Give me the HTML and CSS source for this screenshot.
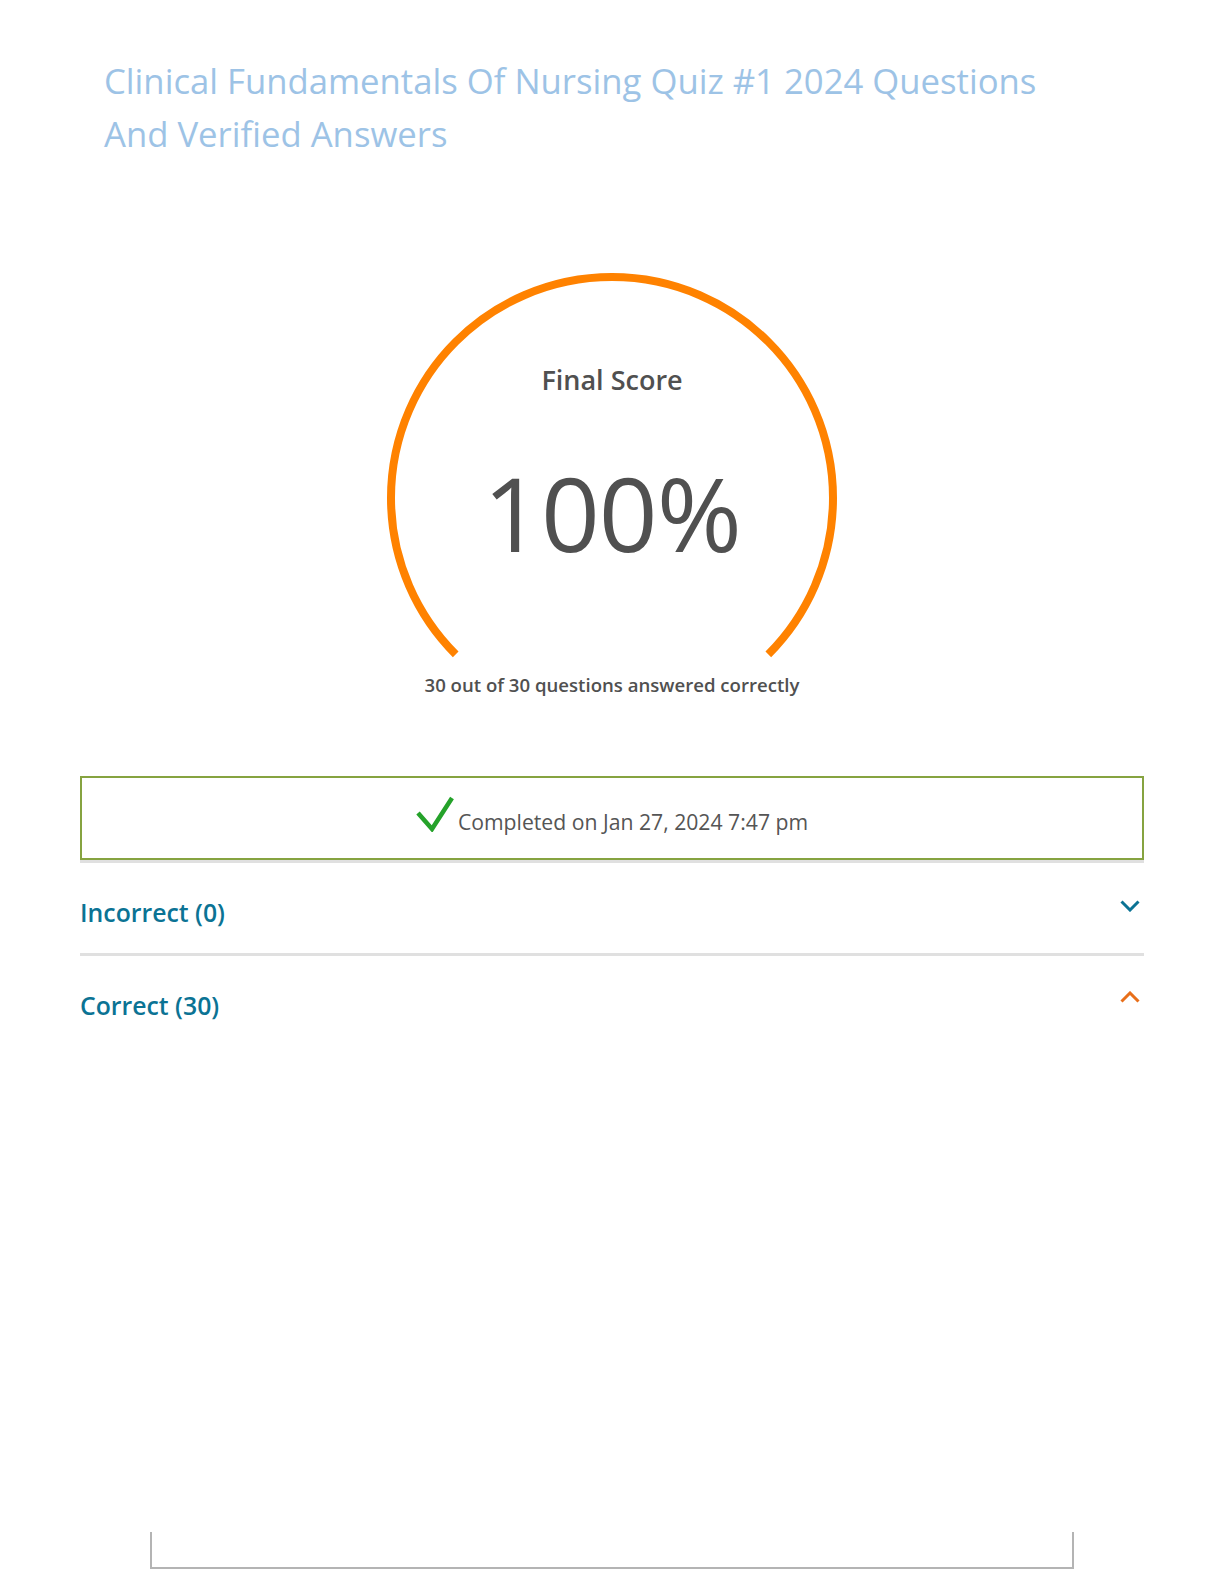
FILE: index.html
```html
<!DOCTYPE html>
<html lang="en">
<head>
<meta charset="utf-8">
<title>Quiz Result</title>
<link rel="stylesheet" href="styles.css">
</head>
<body>
<main class="page">
  <h1 class="title">Clinical Fundamentals Of Nursing Quiz #1 2024 Questions And Verified Answers</h1>

  <section class="gauge">
    <svg class="gauge-arc" width="456" height="456" viewBox="0 0 456 456" aria-hidden="true">
      <path d="M71.7 384.3 A221 221 0 1 1 384.3 384.3" fill="none" stroke="#ff8200" stroke-width="8"/>
    </svg>
    <div class="gauge-label">Final Score</div>
    <div class="gauge-value">100%</div>
    <div class="gauge-sub">30 out of 30 questions answered correctly</div>
  </section>

  <section class="results">
    <div class="completed">
      <svg class="check" width="38" height="36" viewBox="0 0 38 36" aria-hidden="true">
        <path d="M2 17 L16 33 L36 2" fill="none" stroke="#25a22a" stroke-width="4.5" stroke-linejoin="miter"/>
      </svg>
      <span class="completed-text">Completed on Jan 27, 2024 7:47 pm</span>
    </div>

    <div class="row row-first">
      <span class="row-title">Incorrect (0)</span>
      <svg class="chev" width="20" height="12" viewBox="0 0 20 12" aria-hidden="true">
        <path d="M1.5 1.5 L10 10 L18.5 1.5" fill="none" stroke="#0b7394" stroke-width="3"/>
      </svg>
    </div>
    <div class="row row-last">
      <span class="row-title">Correct (30)</span>
      <svg class="chev" width="20" height="12" viewBox="0 0 20 12" aria-hidden="true">
        <path d="M1.5 10.5 L10 2 L18.5 10.5" fill="none" stroke="#e86f1a" stroke-width="3"/>
      </svg>
    </div>
  </section>

  <div class="footer-box"></div>
</main>
</body>
</html>
```

FILE: styles.css
```css
* { box-sizing: border-box; }

html, body {
  margin: 0;
  padding: 0;
  background: #ffffff;
}

body {
  font-family: "Open Sans", "Noto Sans", "DejaVu Sans", sans-serif;
  color: #505050;
}

.page {
  width: 1224px;
  min-height: 1584px;
  display: flex;
  flex-direction: column;
}

.title {
  margin: 54px 0 0 104px;
  width: 990px;
  font-size: 34.7px;
  font-weight: 400;
  line-height: 53px;
  color: #9dc3e6;
}

.gauge {
  position: relative;
  width: 456px;
  height: 456px;
  margin: 110px auto 0;
  display: flex;
  flex-direction: column;
  align-items: center;
  padding-top: 92px;
}

.gauge-arc {
  position: absolute;
  left: 0;
  top: 0;
}

.gauge-label {
  position: relative;
  font-size: 27px;
  font-weight: 600;
  line-height: 36px;
  color: #505050;
}

.gauge-value {
  position: relative;
  margin-top: 59px;
  font-size: 103px;
  font-weight: 500;
  line-height: 110px;
  color: #505050;
  letter-spacing: -1px;
}

.gauge-sub {
  position: relative;
  margin-top: 105px;
  font-size: 18.6px;
  font-weight: 600;
  line-height: 26px;
  color: #505050;
  white-space: nowrap;
}

.results {
  margin: 50px 0 0 80px;
  width: 1064px;
  display: flex;
  flex-direction: column;
}

.completed {
  height: 84px;
  border: 2px solid #86a340;
  display: flex;
  justify-content: center;
  align-items: flex-start;
  gap: 4px;
  padding-top: 18px;
  box-shadow: 0 3px 0 #e0e0e0;
}

.check { display: block; }

.completed-text {
  margin-top: 12px;
  font-size: 21.2px;
  line-height: 28px;
  color: #555555;
}

.row {
  display: flex;
  justify-content: space-between;
  align-items: flex-start;
}

.row-first {
  padding: 36px 0 25px;
  border-bottom: 3px solid #e0e0e0;
}

.row-last {
  padding-top: 33px;
}

.row-title {
  font-size: 24.8px;
  font-weight: 600;
  line-height: 32px;
  color: #0b7394;
}

.chev {
  display: block;
  margin: 4px 4px 0 0;
}

.row-last .chev {
  margin-top: 2px;
}

.footer-box {
  margin: 511px 0 0 150px;
  width: 924px;
  height: 37px;
  border: 2px solid #b4b4b4;
  border-top: none;
}
```
